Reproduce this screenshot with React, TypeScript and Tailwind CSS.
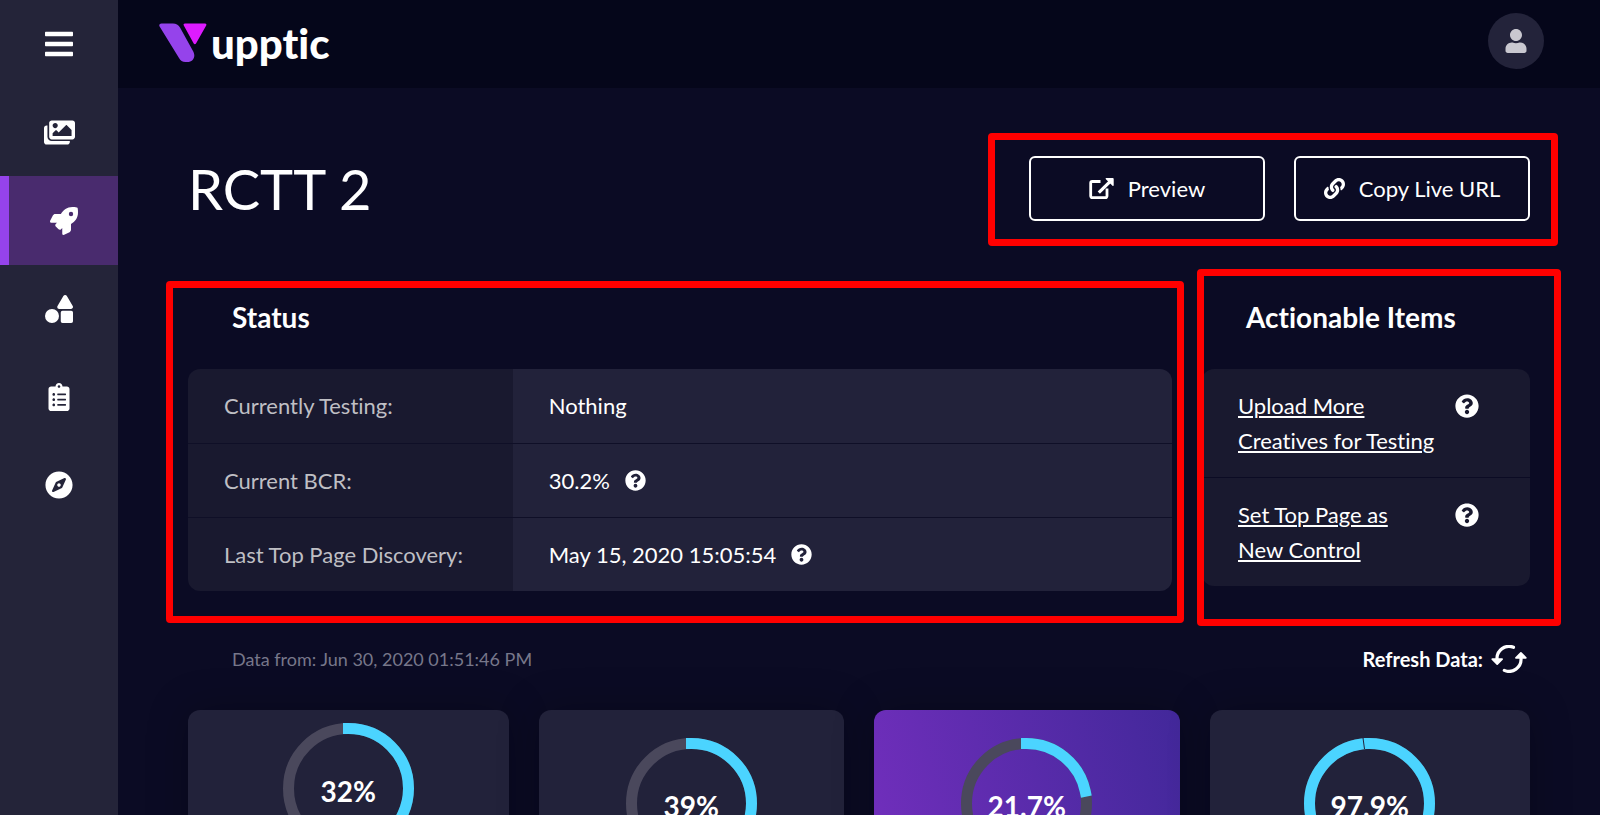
import { FaBars, FaClipboardList, FaCompass, FaImages, FaLink, FaQuestionCircle, FaRocket, FaShapes, FaUser } from 'react-icons/fa'

const navItems = [
  { label: 'Menu', icon: FaBars, size: 32 },
  { label: 'Creatives', icon: FaImages, size: 31 },
  { label: 'Campaigns', icon: FaRocket, size: 28, active: true },
  { label: 'Elements', icon: FaShapes, size: 28 },
  { label: 'Reports', icon: FaClipboardList, size: 28 },
  { label: 'Explore', icon: FaCompass, size: 28 },
]

const statusRows = [
  { label: 'Currently Testing:', value: 'Nothing', help: false },
  { label: 'Current BCR:', value: '30.2%', help: true },
  { label: 'Last Top Page Discovery:', value: 'May 15, 2020 15:05:54', help: true },
]

const actions = ['Upload More Creatives for Testing', 'Set Top Page as New Control']

const stats = [
  { value: 32, card: 'mr-[15px] pt-[13px] bg-[#22223a]' },
  { value: 39, card: 'mx-[15px] pt-7 bg-[#22223a]' },
  { value: 21.7, card: 'mx-[15px] pt-7 bg-linear-[75deg,#752fbf,#42289a]' },
  { value: 97.9, card: 'ml-[15px] pt-7 bg-[#22223a]' },
]

function Logo() {
  return (
    <a href="#" className="flex items-center gap-1 pt-1 pl-px text-white">
      <svg width="48" height="40" viewBox="0 0 48 40" aria-hidden="true">
        <path
          d="M2.5 0.5H14c3 0 5.4 1.4 7 4l13.4 24.2c2.6 5.2-.6 10.3-6 10.3h-2c-3 0-5-1.4-6.4-4L.6 3.6C-.3 2 .7.5 2.5.5z"
          fill="#9543eb"
        />
        <path d="M26 .5h20c1.300 0 1.800 1 1.200 2L37 20.500c-.6 1-1.700 1-2.300 0L24.800 2.500c-.6-1.100 0-2 1.200-2z" fill="#dd1bff" />
      </svg>
      <span className="text-[42px] leading-10 font-black">upptic</span>
    </a>
  )
}

function ExternalIcon() {
  return (
    <svg width="25" height="21" viewBox="0 0 25 21" fill="none" stroke="currentColor" strokeWidth="2.8" aria-hidden="true">
      <path d="M11.500 3.500H3.200a1.500 1.500 0 0 0-1.500 1.500v13.100a1.500 1.500 0 0 0 1.500 1.500h13.300a1.500 1.500 0 0 0 1.500-1.500V10.500" />
      <path d="M9.800 14.600 21 3.600" strokeWidth="3.2" />
      <path d="M17.400 0H23.800c.6 0 .9.300.9.900V7.300c0 .8-.7.900-1.200.500L16.900 1.200C16.400.7 16.600 0 17.400 0z" fill="currentColor" stroke="none" />
    </svg>
  )
}

function RefreshIcon() {
  return (
    <svg width="36" height="28" viewBox="0 0 36 28" fill="none" stroke="currentColor" strokeWidth="3.2" strokeLinecap="round" strokeLinejoin="round" aria-hidden="true">
      <path d="M22.500 2.300A12 12 0 0 0 6 14" />
      <path d="M13.300 25.400A12 12 0 0 0 30 13.500" />
      <path d="M1.300 14.200h9.800L6.200 19z" fill="currentColor" strokeWidth="1.8" />
      <path d="M25 12.800h9.800L29.900 8z" fill="currentColor" strokeWidth="1.8" />
    </svg>
  )
}

// Annotation frame drawn over a section
function Highlight({ className }: { className: string }) {
  return <div className={`pointer-events-none absolute rounded-sm border-[7px] border-[#ff0000] ${className}`} />
}

function HelpButton({ size, label }: { size: number; label: string }) {
  return (
    <button type="button" aria-label={label} className="shrink-0">
      <FaQuestionCircle size={size} />
    </button>
  )
}

function Ring({ value }: { value: number }) {
  return (
    <div className="relative mx-auto size-[131px]">
      <svg viewBox="0 0 131 131" fill="none" strokeWidth="11" aria-hidden="true">
        <circle cx="65.5" cy="65.5" r="60" stroke="#4a485c" />
        <circle
          cx="65.5"
          cy="65.5"
          r="60"
          stroke="#4bd4ff"
          strokeLinecap="square"
          pathLength={100}
          strokeDasharray={`${value} 100`}
          transform="rotate(-90 65.5 65.5)"
        />
        {value > 97 && <path d="M59 0 60.500 11" stroke="#22223a" strokeWidth="1" />}
      </svg>
      <div className="absolute inset-0 flex items-center justify-center pt-1 text-[28px] font-bold text-white">{value}%</div>
    </div>
  )
}

export default function App() {
  return (
    <div className="flex h-screen overflow-hidden bg-[#0b0b24] font-[Lato,sans-serif] text-[22px] text-white [font-variant-ligatures:none]">
      <nav className="flex w-[118px] shrink-0 flex-col bg-[#242439]">
        {navItems.map(({ label, icon: Icon, size, active }) => (
          <button
            key={label}
            type="button"
            aria-label={label}
            className={`flex items-center justify-center ${active ? 'h-[89px] border-l-9 border-[#9543eb] bg-[#492b6e]' : 'h-[88px]'}`}
          >
            <Icon size={size} />
          </button>
        ))}
      </nav>

      <div className="min-w-0 flex-1">
        <header className="flex h-[88px] items-center justify-between bg-[#05061a] pr-14 pb-1.5 pl-10">
          <Logo />
          <button type="button" aria-label="Account" className="flex size-14 items-center justify-center rounded-full bg-[#23233a] text-[#c9c8d0]">
            <FaUser size={24} />
          </button>
        </header>

        <main className="px-[70px] pt-[68px]">
          <div className="flex items-center justify-between">
            <h1 className="text-[56px] leading-[65px]">RCTT 2</h1>
            <div className="relative flex gap-[29px]">
              <button type="button" className="flex h-[65px] w-[236px] items-center justify-center gap-3.5 rounded-md border-2 border-white">
                <ExternalIcon />
                Preview
              </button>
              <button type="button" className="flex h-[65px] w-[236px] items-center justify-center gap-3.5 rounded-md border-2 border-white">
                <FaLink size={21} />
                Copy Live URL
              </button>
              <Highlight className="-top-[23px] -right-7 -bottom-[25px] -left-[41px]" />
            </div>
          </div>

          <div className="mt-[78px] grid grid-cols-[3fr_1fr] items-start gap-[30px]">
            <section className="relative">
              <h2 className="pl-11 text-[28px] leading-9 font-bold">Status</h2>
              <div className="mt-[34px] overflow-hidden rounded-xl">
                <table className="w-full text-left">
                  <tbody className="divide-y divide-[#0f0f27]">
                    {statusRows.map((row) => (
                      <tr key={row.label} className="h-[74px]">
                        <th scope="row" className="w-[33%] bg-[#19192f] pl-9 font-normal text-[#bfbfc4]">
                          {row.label}
                        </th>
                        <td className="bg-[#22223a] pl-9">
                          <div className="flex items-center gap-[15px]">
                            {row.value}
                            {row.help && <HelpButton size={21} label={`About ${row.label}`} />}
                          </div>
                        </td>
                      </tr>
                    ))}
                  </tbody>
                </table>
              </div>
              <Highlight className="-top-[18px] -right-3 -bottom-8 -left-[22px]" />
            </section>

            <section className="relative">
              <h2 className="pl-11 text-[28px] leading-9 font-bold">Actionable Items</h2>
              <ul className="mt-[34px] divide-y divide-[#0b0b24] overflow-hidden rounded-xl bg-[#19192f]">
                {actions.map((action) => (
                  <li key={action} className="flex items-start justify-between py-[19px] pr-[51px] pl-9">
                    <a href="#" className="w-[200px] leading-[35px] underline decoration-2 underline-offset-2">
                      {action}
                    </a>
                    <div className="flex h-[35px] items-center">
                      <HelpButton size={24} label={`About ${action}`} />
                    </div>
                  </li>
                ))}
              </ul>
              <Highlight className="-top-[30px] -right-[31px] -bottom-10 -left-[5px]" />
            </section>
          </div>

          <div className="mt-[50px] flex h-9 items-center justify-between pr-[3px] pl-11">
            <p className="text-lg text-[#77778a]">Data from: Jun 30, 2020 01:51:46 PM</p>
            <button type="button" className="flex items-center gap-2 text-xl font-bold">
              Refresh Data:
              <RefreshIcon />
            </button>
          </div>

          <div className="mt-[33px] grid grid-cols-4">
            {stats.map((stat) => (
              <div key={stat.value} className={`h-64 rounded-xl shadow-[0_0_40px_rgba(0,0,0,0.25)] ${stat.card}`}>
                <Ring value={stat.value} />
              </div>
            ))}
          </div>
        </main>
      </div>
    </div>
  )
}
